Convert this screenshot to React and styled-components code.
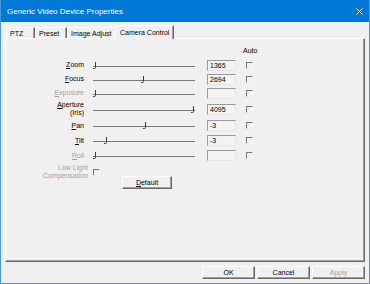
import styled, { createGlobalStyle } from "styled-components";

const GlobalStyle = createGlobalStyle`
  html, body { margin: 0; padding: 0; }
  body {
    background: #f0f0f0;
    font-family: "Liberation Sans", Arial, sans-serif;
  }
`;

const Window = styled.div`
  width: 370px;
  height: 284px;
  box-sizing: border-box;
  display: flex;
  flex-direction: column;
  background: #f0f0f0;
  border: 1px solid #4a96dc;
  border-top: none;
  overflow: hidden;
`;

const TitleBar = styled.div`
  height: 22px;
  margin: 0 -1px;
  padding: 0 7px;
  flex-shrink: 0;
  display: flex;
  align-items: center;
  justify-content: space-between;
  background: #0078d7;
  color: #fff;
  font-size: 8px;
`;

const Body = styled.div`
  flex: 1;
  display: flex;
  flex-direction: column;
  padding: 0 4px;
`;

const TabStrip = styled.div`
  height: 16px;
  display: flex;
  align-items: flex-end;
  padding-left: 1px;
`;

const Tab = styled.div`
  width: ${(p) => p.$w}px;
  height: ${(p) => (p.$active ? 14 : 11)}px;
  margin: ${(p) => (p.$active ? "0 -2px -1px -2px" : "0")};
  position: relative;
  z-index: ${(p) => (p.$active ? 1 : 0)};
  box-sizing: border-box;
  display: flex;
  align-items: center;
  padding: ${(p) => (p.$active ? "0 0 1px 4px" : "1px 0 0 3px")};
  background: #f0f0f0;
  border-top: 1px solid #fff;
  border-left: 1px solid #fff;
  border-right: 1px solid #696969;
  box-shadow: inset -1px 0 #a0a0a0;
  font-size: 7px;
  color: #000;
  white-space: nowrap;
`;

const Panel = styled.div`
  width: 360px;
  height: 224px;
  box-sizing: border-box;
  display: flex;
  flex-direction: column;
  padding-top: 7px;
  border-top: 1px solid #fff;
  border-left: 1px solid #fff;
  border-right: 1px solid #696969;
  border-bottom: 1px solid #696969;
  box-shadow: inset -1px -1px #a0a0a0;
  font-size: 7px;
`;

const HeaderRow = styled.div`
  height: 12px;
  padding-left: 237px;
  line-height: 9px;
`;

const Row = styled.div`
  height: ${(p) => p.$h}px;
  display: flex;
  align-items: center;
`;

const Label = styled.div`
  width: ${(p) => p.$w || 78}px;
  text-align: right;
  line-height: 8px;
  color: ${(p) => (p.$disabled ? "#a0a0a0" : "#000")};
`;

const Track = styled.div`
  width: 102px;
  height: 7px;
  margin-left: 9px;
  position: relative;
  &::before {
    content: "";
    position: absolute;
    left: 0;
    right: 0;
    top: 4px;
    height: 1px;
    background: #7a7a7a;
  }
`;

const Thumb = styled.svg`
  position: absolute;
  top: 0;
  width: 4px;
  height: 7px;
`;

const ValueBox = styled.div`
  width: 29px;
  height: 11px;
  margin-left: 12px;
  box-sizing: border-box;
  padding: 1px 0 0 2px;
  border: 1px solid;
  border-color: #9a9a9a #e6e6e6 #e6e6e6 #9a9a9a;
  background: #f3f3f3;
  line-height: 8px;
  color: #000;
`;

const Check = styled.div`
  width: 7px;
  height: 7px;
  box-sizing: border-box;
  margin-left: ${(p) => p.$ml}px;
  margin-top: ${(p) => p.$mt || 0}px;
  border: 1px solid;
  border-color: #7a7a7a #f8f8f8 #f8f8f8 #7a7a7a;
  background: #f0f0f0;
`;

const LowLightRow = styled.div`
  display: flex;
  align-items: flex-start;
  padding-top: 1px;
`;

const Button = styled.div`
  width: ${(p) => p.$w}px;
  height: 13px;
  margin-left: ${(p) => p.$ml || 0}px;
  margin-top: ${(p) => p.$mt || 0}px;
  box-sizing: border-box;
  display: flex;
  align-items: center;
  justify-content: center;
  border: 1px solid;
  border-color: #fff #696969 #696969 #fff;
  box-shadow: inset -1px -1px #a0a0a0;
  background: #f0f0f0;
  font-size: 7px;
  color: ${(p) => (p.$disabled ? "#a0a0a0" : "#000")};
`;

const ButtonRow = styled.div`
  display: flex;
  justify-content: flex-end;
  gap: 2px;
  margin-top: 4px;
`;

const Key = styled.u`
  text-decoration-thickness: 1px;
  text-underline-offset: 1px;
`;

const controls = [
  { key: "Z", rest: "oom", h: 14, pos: 0, value: "1365" },
  { key: "F", rest: "ocus", h: 14, pos: 0.49, value: "2694" },
  { key: "E", rest: "xposure", h: 14, pos: 0, value: "", disabled: true },
  { key: "A", rest: "perture", sub: "(Iris)", h: 18, pos: 1, value: "4095" },
  { key: "P", rest: "an", h: 15, pos: 0.51, value: "-3" },
  { key: "T", rest: "ilt", h: 15, pos: 0.11, value: "-3" },
  { key: "R", rest: "oll", h: 15, pos: 0, value: "", disabled: true },
];

const SliderThumb = ({ pos }) => (
  <Thumb style={{ left: 2 + pos * 98 - 3 }} viewBox="0 0 4 7">
    <path d="M3.5 0 V5.5 Q3.5 6.5 2.5 6.5 H1" fill="none" stroke="#3a3a3a" strokeWidth="1" />
  </Thumb>
);

const App = () => {
  return (
    <Window>
      <GlobalStyle />
      <TitleBar>
        <span>Generic Video Device Properties</span>
        <svg width="7" height="7" viewBox="0 0 7 7">
          <path d="M0.5 0.5 L6.5 6.5 M6.5 0.5 L0.5 6.5" stroke="#fff" strokeWidth="1" />
        </svg>
      </TitleBar>
      <Body>
        <TabStrip>
          <Tab $w={29}>PTZ</Tab>
          <Tab $w={32}>Preset</Tab>
          <Tab $w={50}>Image Adjust</Tab>
          <Tab $w={59} $active>Camera Control</Tab>
        </TabStrip>
        <Panel>
          <HeaderRow>Auto</HeaderRow>
          {controls.map((c) => (
            <Row key={c.key} $h={c.h}>
              <Label $disabled={c.disabled}>
                <Key>{c.key}</Key>
                {c.rest}
                {c.sub && <div>{c.sub}</div>}
              </Label>
              <Track>
                <SliderThumb pos={c.pos} />
              </Track>
              <ValueBox>{c.value}</ValueBox>
              <Check $ml={10} />
            </Row>
          ))}
          <LowLightRow>
            <Label $w={82} $disabled>
              Low Light
              <div>Compensation</div>
            </Label>
            <Check $ml={5} $mt={5} />
            <Button $w={50} $ml={22} $mt={12}>
              <Key>D</Key>efault
            </Button>
          </LowLightRow>
        </Panel>
        <ButtonRow>
          <Button $w={53}>OK</Button>
          <Button $w={53}>Cancel</Button>
          <Button $w={53} $disabled>Apply</Button>
        </ButtonRow>
      </Body>
    </Window>
  );
};

export default App;
